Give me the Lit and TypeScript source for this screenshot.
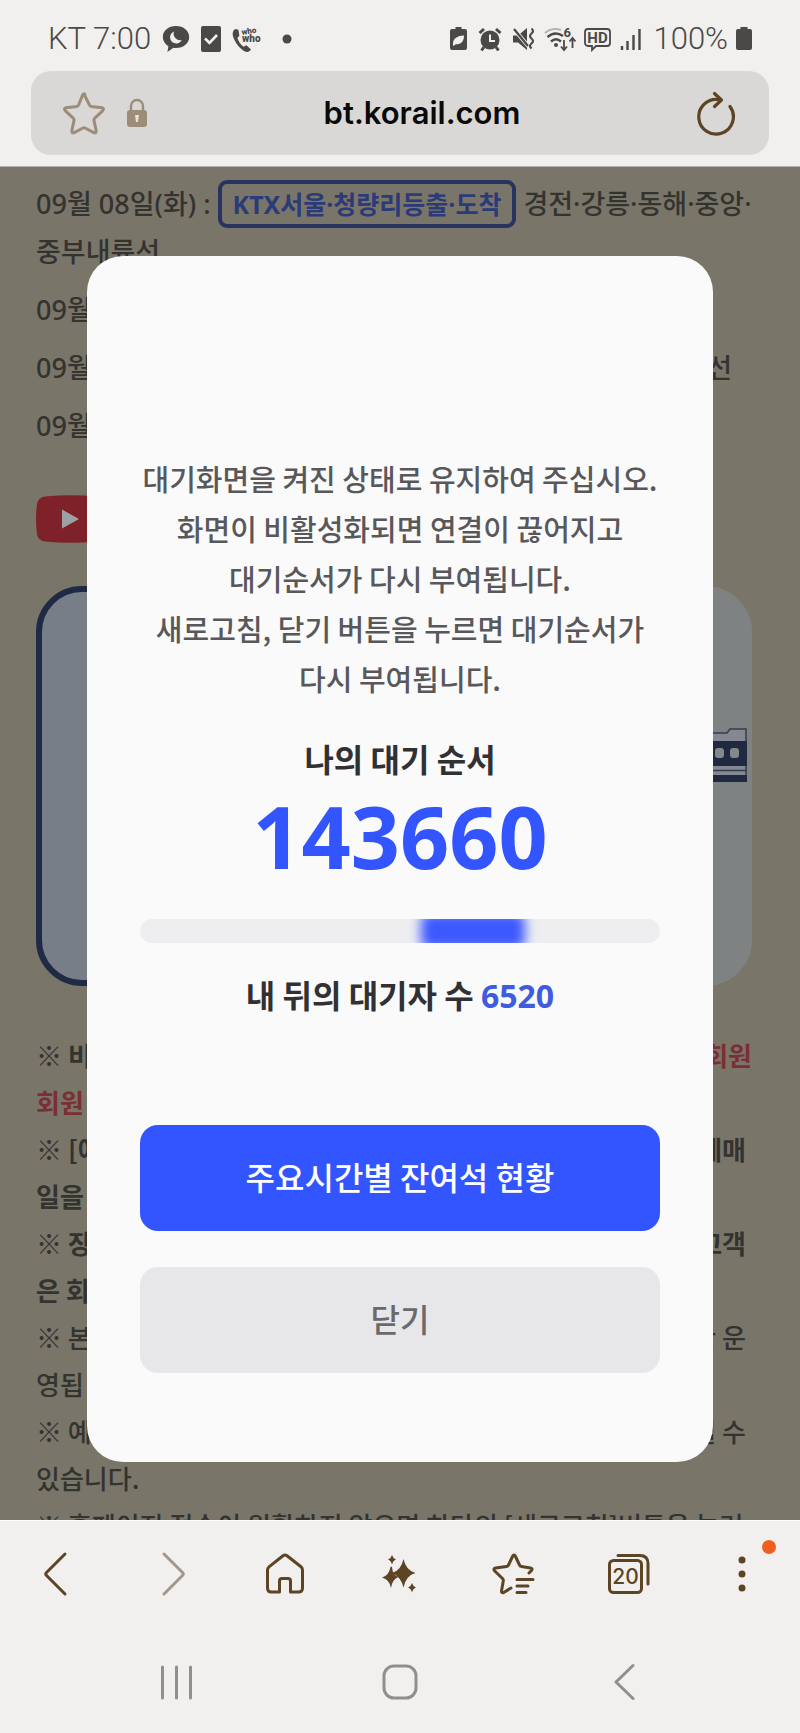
import { LitElement, html, css, svg } from "lit";
import { customElement } from "lit/decorators.js";

const star = "M22 4 L27.5 15.2 Q28 16.2 29 16.4 L40 17.8 Q42.5 18.5 40.8 20.6 L32.6 28.4 Q31.8 29.2 32 30.4 L34.2 41 Q34.3 43.6 31.8 42.6 L23 38 Q22 37.5 21 38 L12.2 42.6 Q9.7 43.6 9.8 41 L12 30.4 Q12.2 29.2 11.4 28.4 L3.2 20.6 Q1.5 18.5 4 17.8 L15 16.4 Q16 16.2 16.5 15.2 L20.6 5 Q22 2.6 23.4 5";

@customElement("status-bar")
export class StatusBar extends LitElement {
  static styles = css`
    :host {
      display: flex;
      justify-content: space-between;
      align-items: center;
      padding: 16px 48px 9px;
      line-height: 46px;
      font-family: Roboto, "Liberation Sans", sans-serif;
      font-weight: 300;
      font-size: 31px;
      color: #4a4947;
    }
    .group {
      display: flex;
      align-items: center;
      gap: 11px;
      white-space: nowrap;
    }
    .tight {
      gap: 8px;
    }
    svg {
      display: block;
      flex: none;
    }
  `;

  render() {
    return html`
      <div class="group">
        <span>KT 7:00</span>
        <svg width="28" height="28" viewBox="0 0 28 28">
          <path fill="#4a4947" d="M14 1C6.500 1 .8 5.700 .8 12c0 4 2.300 7.200 5.600 9.200L5.400 27l6-4.200c.8.100 1.700.2 2.600.2 7.500 0 13.200-4.800 13.200-11S21.500 1 14 1z" />
          <path fill="#f1f0ee" d="M12 6.500a6.200 6.200 0 1 0 7.800 8.600A6.600 6.600 0 0 1 12 6.500z" />
        </svg>
        <svg width="20" height="26" viewBox="0 0 20 26">
          <rect width="20" height="26" rx="2" fill="#4a4947" />
          <path d="M4 12.500l4.500 4.500L16 9" fill="none" stroke="#f1f0ee" stroke-width="2.600" />
        </svg>
        <svg width="32" height="32" viewBox="0 0 32 32">
          <path fill="#4a4947" d="M3.500 6C.2 7.600 0 11.600 2 16c2.200 5 6.500 10 10.500 12.300 2.500 1.300 5 .7 6.500-1.800l-4.600-4.200-2.800 1.500C8.500 21.800 6.600 18.500 5.400 15l2-2.200-1-6z" />
          <text x="10" y="12" font-size="8" font-weight="900" fill="#4a4947" transform="rotate(-10 10 12)" font-family="Roboto">who</text>
          <text x="10" y="19" font-size="10" font-weight="900" fill="#4a4947" font-family="Roboto">who</text>
        </svg>
        <svg width="24" height="10" viewBox="0 0 24 10"><circle cx="12" cy="5" r="4.500" fill="#4a4947" /></svg>
      </div>
      <div class="group tight">
        <svg width="20" height="26" viewBox="0 0 20 26">
          <path fill="#4a4947" d="M6.500 1h6v2h3.500a2 2 0 0 1 2 2v17a2 2 0 0 1-2 2H3a2 2 0 0 1-2-2V5a2 2 0 0 1 2-2h3.500z" />
          <path fill="#f1f0ee" d="M4 19.500C3.500 13 7 10 15 9.500c0 6-3 9.500-8.500 8.500l5.500-4.500-7 6.300z" />
        </svg>
        <svg width="26" height="26" viewBox="0 0 26 26">
          <circle cx="13" cy="14" r="9.500" fill="#4a4947" />
          <path d="M2.500 7L7 3M23.500 7L19 3M7 21l-2.500 3.500M19 21l2.500 3.500" stroke="#4a4947" stroke-width="3" />
          <path d="M13 8.500V15h5" fill="none" stroke="#f1f0ee" stroke-width="2" />
        </svg>
        <svg width="25" height="26" viewBox="0 0 25 26">
          <path fill="#4a4947" d="M2 9.500h5L16 2v22l-9-7.500H2z" />
          <path d="M2 2l16 19" stroke="#f1f0ee" stroke-width="4" />
          <path d="M3 3l14 17" stroke="#4a4947" stroke-width="2.200" />
          <path d="M20.500 2.500q3 2.500 0 5t0 5 0 5 0 5" fill="none" stroke="#4a4947" stroke-width="2.200" />
        </svg>
        <svg width="32" height="26" viewBox="0 0 32 26">
          <path d="M1 7Q8 1 17 4" fill="none" stroke="#b5b4b2" stroke-width="2.200" />
          <path d="M3.500 11Q11 4.500 19 10M7 15.500q5-4.500 10 0" fill="none" stroke="#4a4947" stroke-width="2.400" />
          <circle cx="12" cy="19" r="2" fill="#4a4947" />
          <text x="19.500" y="11" font-size="13" font-weight="700" fill="#4a4947" font-family="Roboto">6</text>
          <path d="M20 14v10m-3-3.500l3 3.500 3-3.500M28.500 22V12m-3 3.500l3-3.500 3 3.500" fill="none" stroke="#4a4947" stroke-width="1.800" />
        </svg>
        <svg width="27" height="26" viewBox="0 0 27 26">
          <path d="M4 3h19a3 3 0 0 1 3 3v11a3 3 0 0 1-3 3H12l-4 4v-4H4a3 3 0 0 1-3-3V6a3 3 0 0 1 3-3z" fill="none" stroke="#4a4947" stroke-width="1.800" />
          <text x="13.500" y="17" text-anchor="middle" font-size="15" font-weight="700" fill="#4a4947" font-family="Roboto">HD</text>
        </svg>
        <svg width="26" height="26" viewBox="0 0 26 26">
          <path d="M3 20v4M8.500 15v9M14.500 9v15M20.500 3v21" stroke="#4a4947" stroke-width="2.400" />
        </svg>
        <span>100%</span>
        <svg width="16" height="26" viewBox="0 0 16 26">
          <path fill="#4a4947" d="M4.500 1h7v2H14a2 2 0 0 1 2 2v17a2 2 0 0 1-2 2H2a2 2 0 0 1-2-2V5a2 2 0 0 1 2-2h2.500z" />
        </svg>
      </div>
    `;
  }
}

@customElement("address-bar")
export class AddressBar extends LitElement {
  static styles = css`
    :host {
      display: flex;
      align-items: center;
      margin: 0 31px 11px;
      padding: 0 33px 0 31px;
      height: 84px;
      border-radius: 20px;
      background: #d9d8d6;
    }
    .icon {
      display: block;
      flex: none;
      padding: 0;
      border: 0;
      background: none;
    }
    svg {
      display: block;
    }
    .lock {
      margin-left: 20px;
    }
    .url {
      flex: 1;
      min-width: 0;
      border: 0;
      outline: 0;
      padding: 0;
      background: none;
      text-align: center;
      color: #0a0a0a;
      font: 600 31px/40px Inter, "Liberation Sans", sans-serif;
    }
  `;

  render() {
    return html`
      <button class="icon" aria-label="북마크 추가">
        <svg width="44" height="46" viewBox="0 0 44 46">
          <path d=${star} fill="none" stroke="#9c8d78" stroke-width="3" stroke-linejoin="round" />
        </svg>
      </button>
      <svg class="lock" width="22" height="30" viewBox="0 0 22 30">
        <path d="M5 13V8a6 6 0 0 1 12 0v5" fill="none" stroke="#9c8d78" stroke-width="2.400" />
        <rect x="1" y="12" width="20" height="17" rx="3" fill="#9c8d78" />
        <path d="M9 17h4l-1 7h-2z" fill="#e4e1dc" />
      </svg>
      <input class="url" type="text" aria-label="주소" value="bt.korail.com" />
      <button class="icon" aria-label="새로고침">
        <svg width="40" height="48" viewBox="0 0 40 48">
          <path d="M34 17.500A17.300 17.300 0 1 1 23.500 10.800" fill="none" stroke="#5c4424" stroke-width="3.200" stroke-linecap="round" />
          <path d="M18.500 4.500l7 6.500-7 6.500" fill="none" stroke="#5c4424" stroke-width="3.200" stroke-linecap="round" stroke-linejoin="round" />
        </svg>
      </button>
    `;
  }
}

@customElement("notice-page")
export class NoticePage extends LitElement {
  static styles = css`
    :host {
      display: grid;
      grid-template-columns: minmax(0, 1fr);
      align-content: start;
      padding: 13px 48px 0 36px;
      color: #333330;
      font-family: "Noto Sans CJK KR", sans-serif;
      font-weight: 500;
    }
    .dates {
      display: grid;
      grid-template-columns: minmax(0, 1fr);
      gap: 10px;
      margin: 0;
      padding: 0;
      list-style: none;
      font-family: "Noto Sans", "Noto Sans CJK KR", sans-serif;
      font-size: 27px;
      line-height: 48px;
      white-space: nowrap;
    }
    .row {
      display: flex;
      justify-content: space-between;
    }
    .short {
      padding-right: 20px;
    }
    .badge {
      display: inline-block;
      box-sizing: border-box;
      height: 48px;
      padding: 0 11px;
      border: 4px solid #27345f;
      border-radius: 9px;
      font-size: 25px;
      font-weight: 700;
      line-height: 40px;
      color: #2b3a78;
      vertical-align: top;
    }
    .tube {
      display: block;
      margin: 45px 0 43px;
    }
    .cards {
      display: grid;
      grid-template-columns: 1fr 1fr;
      gap: 16px;
    }
    .card {
      box-sizing: border-box;
      height: 400px;
      border-radius: 46px;
      background: #7f8283;
    }
    .selected {
      border: 6px solid #1f2a44;
      background: #777e88;
    }
    .line {
      display: flex;
      align-items: flex-start;
      justify-content: flex-end;
      padding: 142px 5px 0 0;
    }
    .notes {
      margin: 45px 0 0;
      padding: 0;
      list-style: none;
      font-size: 26px;
      line-height: 47px;
      white-space: nowrap;
    }
    .ragged {
      padding-right: 6px;
    }
    .bold {
      font-weight: 700;
    }
    .red {
      color: #7c2f33;
    }
  `;

  render() {
    return html`
      <ul class="dates">
        <li>09월 08일(화) : <span class="badge">KTX서울·청량리등출·도착</span> 경전·강릉·동해·중앙·<br />중부내륙선</li>
        <li class="row short"><span>09월</span></li>
        <li class="row short"><span>09월</span><span>선</span></li>
        <li class="row short"><span>09월</span></li>
      </ul>
      <svg class="tube" width="70" height="48" viewBox="0 0 70 48">
        <path fill="#7e2129" d="M9 1.500Q35-1 61 1.500 68 2.500 69 9q2 15 0 30-1 6.500-8 7.500-26 2.500-52 0Q2 45.500 1 39-1 24 1 9 2 2.500 9 1.500z" />
        <path fill="#9fa0a4" d="M26 14.500v19L43 24z" />
      </svg>
      <div class="cards">
        <div class="card selected"></div>
        <div class="card line">
          <svg width="90" height="54" viewBox="0 0 90 54">
            <path d="M0 5h70l3-4h16v52H0z" fill="#858890" stroke="#343c50" stroke-width="1.500" />
            <path d="M0 13h90v25H0zM0 47h90v7H0z" fill="#1f2a40" />
            <path d="M0 42.500h90" stroke="#343c50" stroke-width="1.500" />
            <g fill="#84878c">
              <rect x="38" y="20" width="9" height="10" rx="3" />
              <rect x="58" y="20" width="9" height="10" rx="3" />
              <rect x="73" y="20" width="9" height="10" rx="3" />
            </g>
          </svg>
        </div>
      </div>
      <ul class="notes">
        <li class="bold">
          <div class="row"><span>※ 비</span><span class="red">회원</span></div>
          <div class="red">회원</div>
        </li>
        <li class="bold">
          <div class="row ragged"><span>※ [예</span><span>예매</span></div>
          <div>일을</div>
        </li>
        <li class="bold">
          <div class="row ragged"><span>※ 장애</span><span>고객</span></div>
          <div>은 회</div>
        </li>
        <li>
          <div class="row ragged"><span>※ 본</span><span>간 운</span></div>
          <div>영됩</div>
        </li>
        <li>
          <div class="row ragged"><span>※ 예매</span><span>될 수</span></div>
          <div>있습니다.</div>
        </li>
        <li>※ 홈페이지 접속이 원활하지 않으면 하단의 [새로고침]버튼을 눌러</li>
      </ul>
    `;
  }
}

@customElement("queue-dialog")
export class QueueDialog extends LitElement {
  static styles = css`
    :host {
      display: block;
      box-sizing: border-box;
      padding: 197px 53px 89px;
      border-radius: 36px;
      background: #fafafa;
      font-family: "Noto Sans CJK KR", sans-serif;
      text-align: center;
      color: #313133;
    }
    .guide {
      margin: 0;
      font-size: 29px;
      font-weight: 500;
      line-height: 50px;
      white-space: nowrap;
      color: #58585a;
    }
    .title {
      margin: 30px 0 0;
      font-size: 32px;
      font-weight: 700;
      line-height: 50px;
    }
    .rank {
      margin: 0;
      font-family: "Noto Sans", sans-serif;
      font-size: 86px;
      font-weight: 700;
      line-height: 106px;
      color: #3355ff;
    }
    .track {
      height: 24px;
      margin: 30px 0 26px;
      border-radius: 12px;
      overflow: hidden;
      background: #eeeef0;
    }
    .pulse {
      width: 104px;
      height: 36px;
      margin: -6px 0 0 54%;
      border-radius: 8px;
      background: #3c58ff;
      filter: blur(6px);
    }
    .behind {
      margin: 0;
      font-size: 32px;
      font-weight: 700;
      line-height: 50px;
    }
    .count {
      font-family: "Noto Sans", sans-serif;
      color: #3f5be0;
    }
    .actions {
      display: grid;
      gap: 36px;
      margin-top: 104px;
    }
    .action {
      height: 106px;
      padding: 0 0 4px;
      border: 0;
      border-radius: 18px;
      background: #e7e7e9;
      color: #6a6a6c;
      font: 500 32px/50px "Noto Sans CJK KR", sans-serif;
    }
    .primary {
      background: #3355ff;
      color: #fff;
    }
  `;

  render() {
    return html`
      <p class="guide">
        대기화면을 켜진 상태로 유지하여 주십시오.<br />화면이 비활성화되면 연결이 끊어지고<br />대기순서가
        다시 부여됩니다.<br />새로고침, 닫기 버튼을 누르면 대기순서가<br />다시 부여됩니다.
      </p>
      <h2 class="title">나의 대기 순서</h2>
      <p class="rank">143660</p>
      <div class="track" role="progressbar" aria-label="대기 중"><div class="pulse"></div></div>
      <p class="behind">내 뒤의 대기자 수 <span class="count">6520</span></p>
      <div class="actions">
        <button class="action primary">주요시간별 잔여석 현황</button>
        <button class="action">닫기</button>
      </div>
    `;
  }
}

const tools = [
  { label: "뒤로", icon: svg`<path d="M48 20L29.500 38.500Q28 40 29.500 41.500L48 60" />` },
  { label: "앞으로", icon: svg`<path d="M33 20L51.500 38.500Q53 40 51.500 41.500L33 60" stroke="#a3968a" />` },
  { label: "홈", icon: svg`<path d="M21.500 36q0-2 1.500-3.200l14-11q2-1.500 4 0l14 11q1.500 1.200 1.500 3.200v18q0 4-4 4h-8V47q0-2.500-2.500-2.500h-6Q33.500 44.500 33.500 47v11h-8q-4 0-4-4z" />` },
  {
    label: "브라우징 어시스트",
    icon: svg`<g fill="#5c4424" stroke="none">
      <path d="M43.500 25q2.500 11.500 12 14-9.500 2.500-12 14.500-2.500-10-9.500-13.500l-2-1q9-2.500 11.500-14z" />
      <path d="M30.500 33q.5-1 1.500 0 .5 8 6.500 10-6 2-7.500 11-1.500-8.500-9-10.500 7-2 8.500-10.500z" />
      <path d="M32 21q1 3.500 4 4.500-3 1-4 5-1-4-4-5 3-1 4-4.500z" />
      <path d="M52 49q1 3.500 4 4.500-3 1-4 5-1-4-4-5 3-1 4-4.500z" />
    </g>`,
  },
  {
    label: "북마크",
    icon: svg`<path d="M55 39l2.500-2.500Q59 34.500 56.500 34l-9-1.500q-1.500-.2-2-1.500l-4-8.500q-1.500-3-3 0l-4 8.500q-.5 1.300-2 1.500l-11 1.500q-2.500.7-1 2.700l8 7.800q1 1 .8 2.300L27.500 57q-.2 2.500 2.200 1.500l7.300-4.500M43 45.500h16M43 52h11M43 58.500h9" />`,
  },
  {
    label: "탭",
    icon: svg`<rect x="20.500" y="26.500" width="32" height="32" rx="4" />
      <path d="M29 21.500h22q8 0 8 8V50" />
      <text x="36.500" y="50" text-anchor="middle" font-size="21" font-weight="500" font-family="Inter" fill="#5c4424" stroke="none">20</text>`,
  },
  {
    label: "더보기",
    icon: svg`<g fill="#5c4424" stroke="none"><circle cx="39" cy="26" r="3.500" /><circle cx="39" cy="40" r="3.500" /><circle cx="39" cy="54" r="3.500" /></g>
      <circle cx="66" cy="13" r="7" fill="#ef6020" stroke="none" />`,
  },
];

@customElement("bottom-bars")
export class BottomBars extends LitElement {
  static styles = css`
    :host {
      display: block;
      border-top: 1px solid #fbfbfa;
      background: #f1f0ee;
    }
    .tools {
      display: grid;
      grid-template-columns: repeat(7, 1fr);
      height: 105px;
    }
    .system {
      display: grid;
      grid-template-columns: repeat(3, 1fr);
      height: 107px;
      padding: 0 64px;
    }
    button {
      display: grid;
      place-items: center;
      padding: 0;
      border: 0;
      background: none;
    }
    svg {
      display: block;
      fill: none;
      stroke: #5c4424;
      stroke-width: 3;
      stroke-linecap: round;
      stroke-linejoin: round;
    }
    .gray {
      stroke: #8f8f8f;
    }
  `;

  render() {
    return html`
      <nav class="tools" aria-label="브라우저 도구">
        ${tools.map((t) => html`<button aria-label=${t.label}><svg width="80" height="80" viewBox="0 0 80 80">${t.icon}</svg></button>`)}
      </nav>
      <nav class="system" aria-label="시스템 탐색">
        <button aria-label="최근 앱"><svg class="gray" width="40" height="40" viewBox="0 0 40 40"><path d="M6.500 7v31M20.500 7v31M34.500 7v31" /></svg></button>
        <button aria-label="홈 화면"><svg class="gray" width="40" height="40" viewBox="0 0 40 40"><rect x="4" y="6" width="32" height="32" rx="10" /></svg></button>
        <button aria-label="이전"><svg class="gray" width="40" height="40" viewBox="0 0 40 40"><path d="M29 5.500L12 22 29 38.500" /></svg></button>
      </nav>
    `;
  }
}

@customElement("app-root")
export class AppRoot extends LitElement {
  static styles = css`
    :host {
      display: flex;
      flex-direction: column;
      height: 100vh;
      background: #f1f0ee;
    }
    header,
    bottom-bars {
      flex: none;
    }
    main {
      display: grid;
      grid-template-columns: minmax(0, 1fr);
      flex: 1;
      min-height: 0;
      overflow: hidden;
      border-top: 1px solid #b4b2ad;
      background: #7a7569;
    }
    notice-page,
    queue-dialog {
      grid-area: 1 / 1;
    }
    queue-dialog {
      z-index: 1;
      align-self: start;
      justify-self: center;
      width: 78.25%;
      min-width: 626px;
      margin-top: 89px;
    }
  `;

  render() {
    return html`
      <header>
        <status-bar></status-bar>
        <address-bar></address-bar>
      </header>
      <main>
        <notice-page></notice-page>
        <queue-dialog role="dialog" aria-modal="true" aria-label="접속 대기"></queue-dialog>
      </main>
      <bottom-bars></bottom-bars>
    `;
  }
}
